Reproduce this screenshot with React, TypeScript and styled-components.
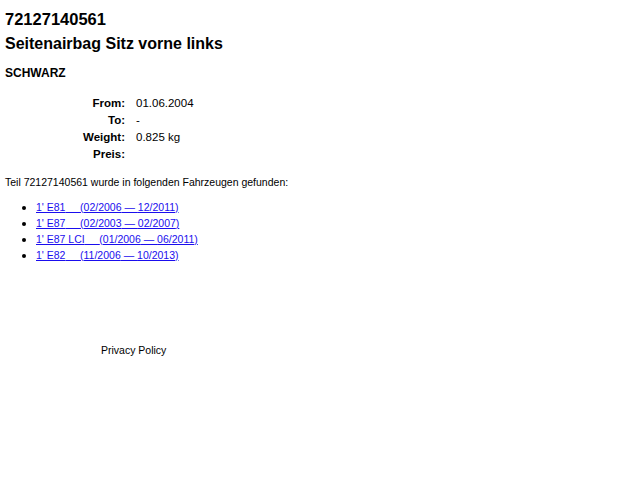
import styled, { createGlobalStyle } from 'styled-components';

const GlobalStyle = createGlobalStyle`
  body {
    margin: 0;
    background: #fff;
    color: #000;
    font-family: "Liberation Sans", Arial, Helvetica, sans-serif;
  }
`;

const Page = styled.div`
  padding: 8px 5px;
`;

const PartNumber = styled.h1`
  margin: 1px 0 0;
  font-size: 16.5px;
  line-height: 20px;
  font-weight: bold;
`;

const PartName = styled.h2`
  margin: 5px 0 0;
  font-size: 16px;
  line-height: 20px;
  font-weight: bold;
`;

const Color = styled.h3`
  margin: 11px 0 0;
  font-size: 12px;
  line-height: 16px;
  font-weight: bold;
`;

const Details = styled.table`
  margin: 14px 0 0 10px;
  border-collapse: collapse;
`;

const Label = styled.th`
  width: 110px;
  padding: 2px 5px 3px 0;
  text-align: right;
  font-weight: bold;
  font-size: 11.5px;
  line-height: 12px;
`;

const Value = styled.td`
  padding: 2px 0 3px 6px;
  font-size: 11.5px;
  line-height: 12px;
`;

const Intro = styled.p`
  margin: 12px 0 0;
  font-size: 10.5px;
  line-height: 14px;
`;

const VehicleList = styled.ul`
  margin: 10px 0 0;
  padding-left: 31px;
  font-size: 10.5px;
  line-height: 16px;

  li::marker {
    font-size: 12px;
  }
`;

const VehicleLink = styled.a`
  color: #1a0dee;
  text-decoration: underline;
`;

const Footer = styled.div`
  margin: 80px 0 0 96px;
  font-size: 10.5px;
  line-height: 14px;
`;

interface Vehicle {
  model: string;
  gap: number;
  from: string;
  to: string;
}

const vehicles: Vehicle[] = [
  { model: "1' E81", gap: 5, from: '02/2006', to: '12/2011' },
  { model: "1' E87", gap: 5, from: '02/2003', to: '02/2007' },
  { model: "1' E87 LCI", gap: 5, from: '01/2006', to: '06/2011' },
  { model: "1' E82", gap: 5, from: '11/2006', to: '10/2013' },
];

const details: [string, string][] = [
  ['From:', '01.06.2004'],
  ['To:', '-'],
  ['Weight:', '0.825 kg'],
  ['Preis:', ''],
];

function App() {
  return (
    <Page>
      <GlobalStyle />
      <PartNumber>72127140561</PartNumber>
      <PartName>Seitenairbag Sitz vorne links</PartName>
      <Color>SCHWARZ</Color>
      <Details>
        <tbody>
          {details.map(([label, value]) => (
            <tr key={label}>
              <Label>{label}</Label>
              <Value>{value}</Value>
            </tr>
          ))}
        </tbody>
      </Details>
      <Intro>Teil 72127140561 wurde in folgenden Fahrzeugen gefunden:</Intro>
      <VehicleList>
        {vehicles.map(v => (
          <li key={v.model}>
            <VehicleLink href="#">
              {v.model}
              {'\u00a0'.repeat(v.gap)}({v.from} — {v.to})
            </VehicleLink>
          </li>
        ))}
      </VehicleList>
      <Footer>Privacy Policy</Footer>
    </Page>
  );
}

export default App;
